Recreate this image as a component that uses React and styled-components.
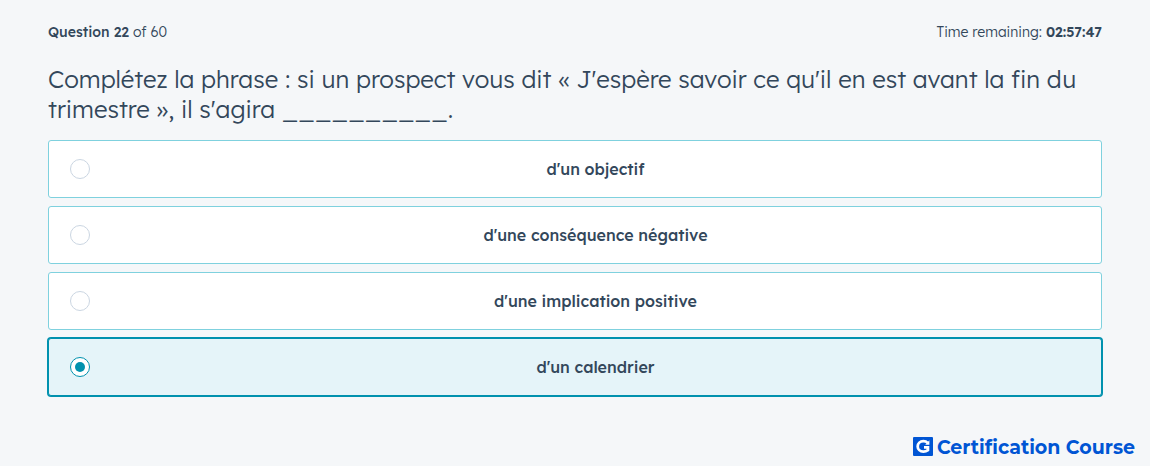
import { useState } from "react";
import styled, { createGlobalStyle } from "styled-components";

const GlobalStyle = createGlobalStyle`
  * {
    box-sizing: border-box;
  }

  body {
    margin: 0;
    background-color: #f5f7f9;
    color: #33475b;
    font-family: "Lexend Deca", Inter, sans-serif;
  }
`;

const Page = styled.div`
  min-height: 100vh;
  display: flex;
  flex-direction: column;
`;

const Quiz = styled.main`
  padding: 20px 48px 0;
`;

const StatusBar = styled.div`
  display: flex;
  justify-content: space-between;
  font-size: 14px;
  font-weight: 300;
  line-height: 24px;
`;

const Progress = styled.span`
  b {
    font-weight: 500;
  }
`;

const Timer = styled.span`
  b {
    font-weight: 600;
  }
`;

const Fieldset = styled.fieldset`
  margin: 20px 0 0;
  padding: 0;
  border: 0;
  min-width: 0;
`;

const Question = styled.legend`
  padding: 0;
  margin-bottom: 16px;
  font-size: 24px;
  font-weight: 300;
  line-height: 30px;
`;

const Options = styled.div`
  display: flex;
  flex-direction: column;
  gap: 8px;
`;

const Option = styled.label`
  display: flex;
  align-items: center;
  padding: 18px 0 18px 21px;
  border: 1px solid ${({ $selected }) => ($selected ? "#0091ae" : "#7fd1de")};
  border-radius: 3px;
  background-color: ${({ $selected }) => ($selected ? "#e5f4f9" : "#fff")};
  box-shadow: ${({ $selected }) => ($selected ? "0 0 0 1px #0091ae" : "none")};
  cursor: pointer;
`;

const Radio = styled.input`
  appearance: none;
  flex: none;
  display: grid;
  place-items: center;
  width: 20px;
  height: 20px;
  margin: 0;
  border: 1px solid #cbd6e2;
  border-radius: 50%;
  background-color: #fff;

  &:checked {
    border-color: #0091ae;
  }

  &:checked::before {
    content: "";
    width: 10px;
    height: 10px;
    border-radius: 50%;
    background-color: #0091ae;
  }
`;

const OptionText = styled.span`
  flex: 1;
  text-align: center;
  font-size: 16px;
  font-weight: 500;
  line-height: 20px;
`;

const Footer = styled.footer`
  display: flex;
  justify-content: flex-end;
  margin-top: auto;
  padding: 24px 15px 6px;
`;

const Brand = styled.div`
  display: flex;
  align-items: flex-start;
  gap: 4px;
  color: #0055d4;
  font-family: Montserrat, Inter, sans-serif;
  font-size: 19px;
  font-weight: 700;
  line-height: 24px;
`;

const answers = [
  "d'un objectif",
  "d'une conséquence négative",
  "d'une implication positive",
  "d'un calendrier",
];

function BrandMark() {
  return (
    <svg width="20" height="20" viewBox="0 0 20 20" aria-hidden="true">
      <rect width="20" height="19" y="1" rx="1" fill="#0055d4" />
      <path
        d="M14.6 6.9C13.4 5.6 12 5.2 10.4 5.2C7 5.2 4.7 7.5 4.7 10.4S7 15.6 10.4 15.6C12.1 15.6 13.6 15.1 14.9 14.1V11.4H11"
        fill="none"
        stroke="#fff"
        strokeWidth="2.8"
      />
      <path d="M16.4 4.2V8.8H12.2Z" fill="#fff" />
    </svg>
  );
}

export default function App() {
  const [selected, setSelected] = useState(3);

  return (
    <>
      <GlobalStyle />
      <Page>
        <Quiz>
          <StatusBar>
            <Progress>
              <b>Question 22</b> of 60
            </Progress>
            <Timer>
              Time remaining: <b>02:57:47</b>
            </Timer>
          </StatusBar>

          <Fieldset>
            <Question>
              Complétez la phrase : si un prospect vous dit « J'espère savoir ce
              qu'il en est avant la fin du trimestre », il s'agira __________.
            </Question>
            <Options>
              {answers.map((answer, index) => (
                <Option key={answer} $selected={index === selected}>
                  <Radio
                    type="radio"
                    name="answer"
                    checked={index === selected}
                    onChange={() => setSelected(index)}
                  />
                  <OptionText>{answer}</OptionText>
                </Option>
              ))}
            </Options>
          </Fieldset>
        </Quiz>

        <Footer>
          <Brand>
            <BrandMark />
            Certification Course
          </Brand>
        </Footer>
      </Page>
    </>
  );
}
